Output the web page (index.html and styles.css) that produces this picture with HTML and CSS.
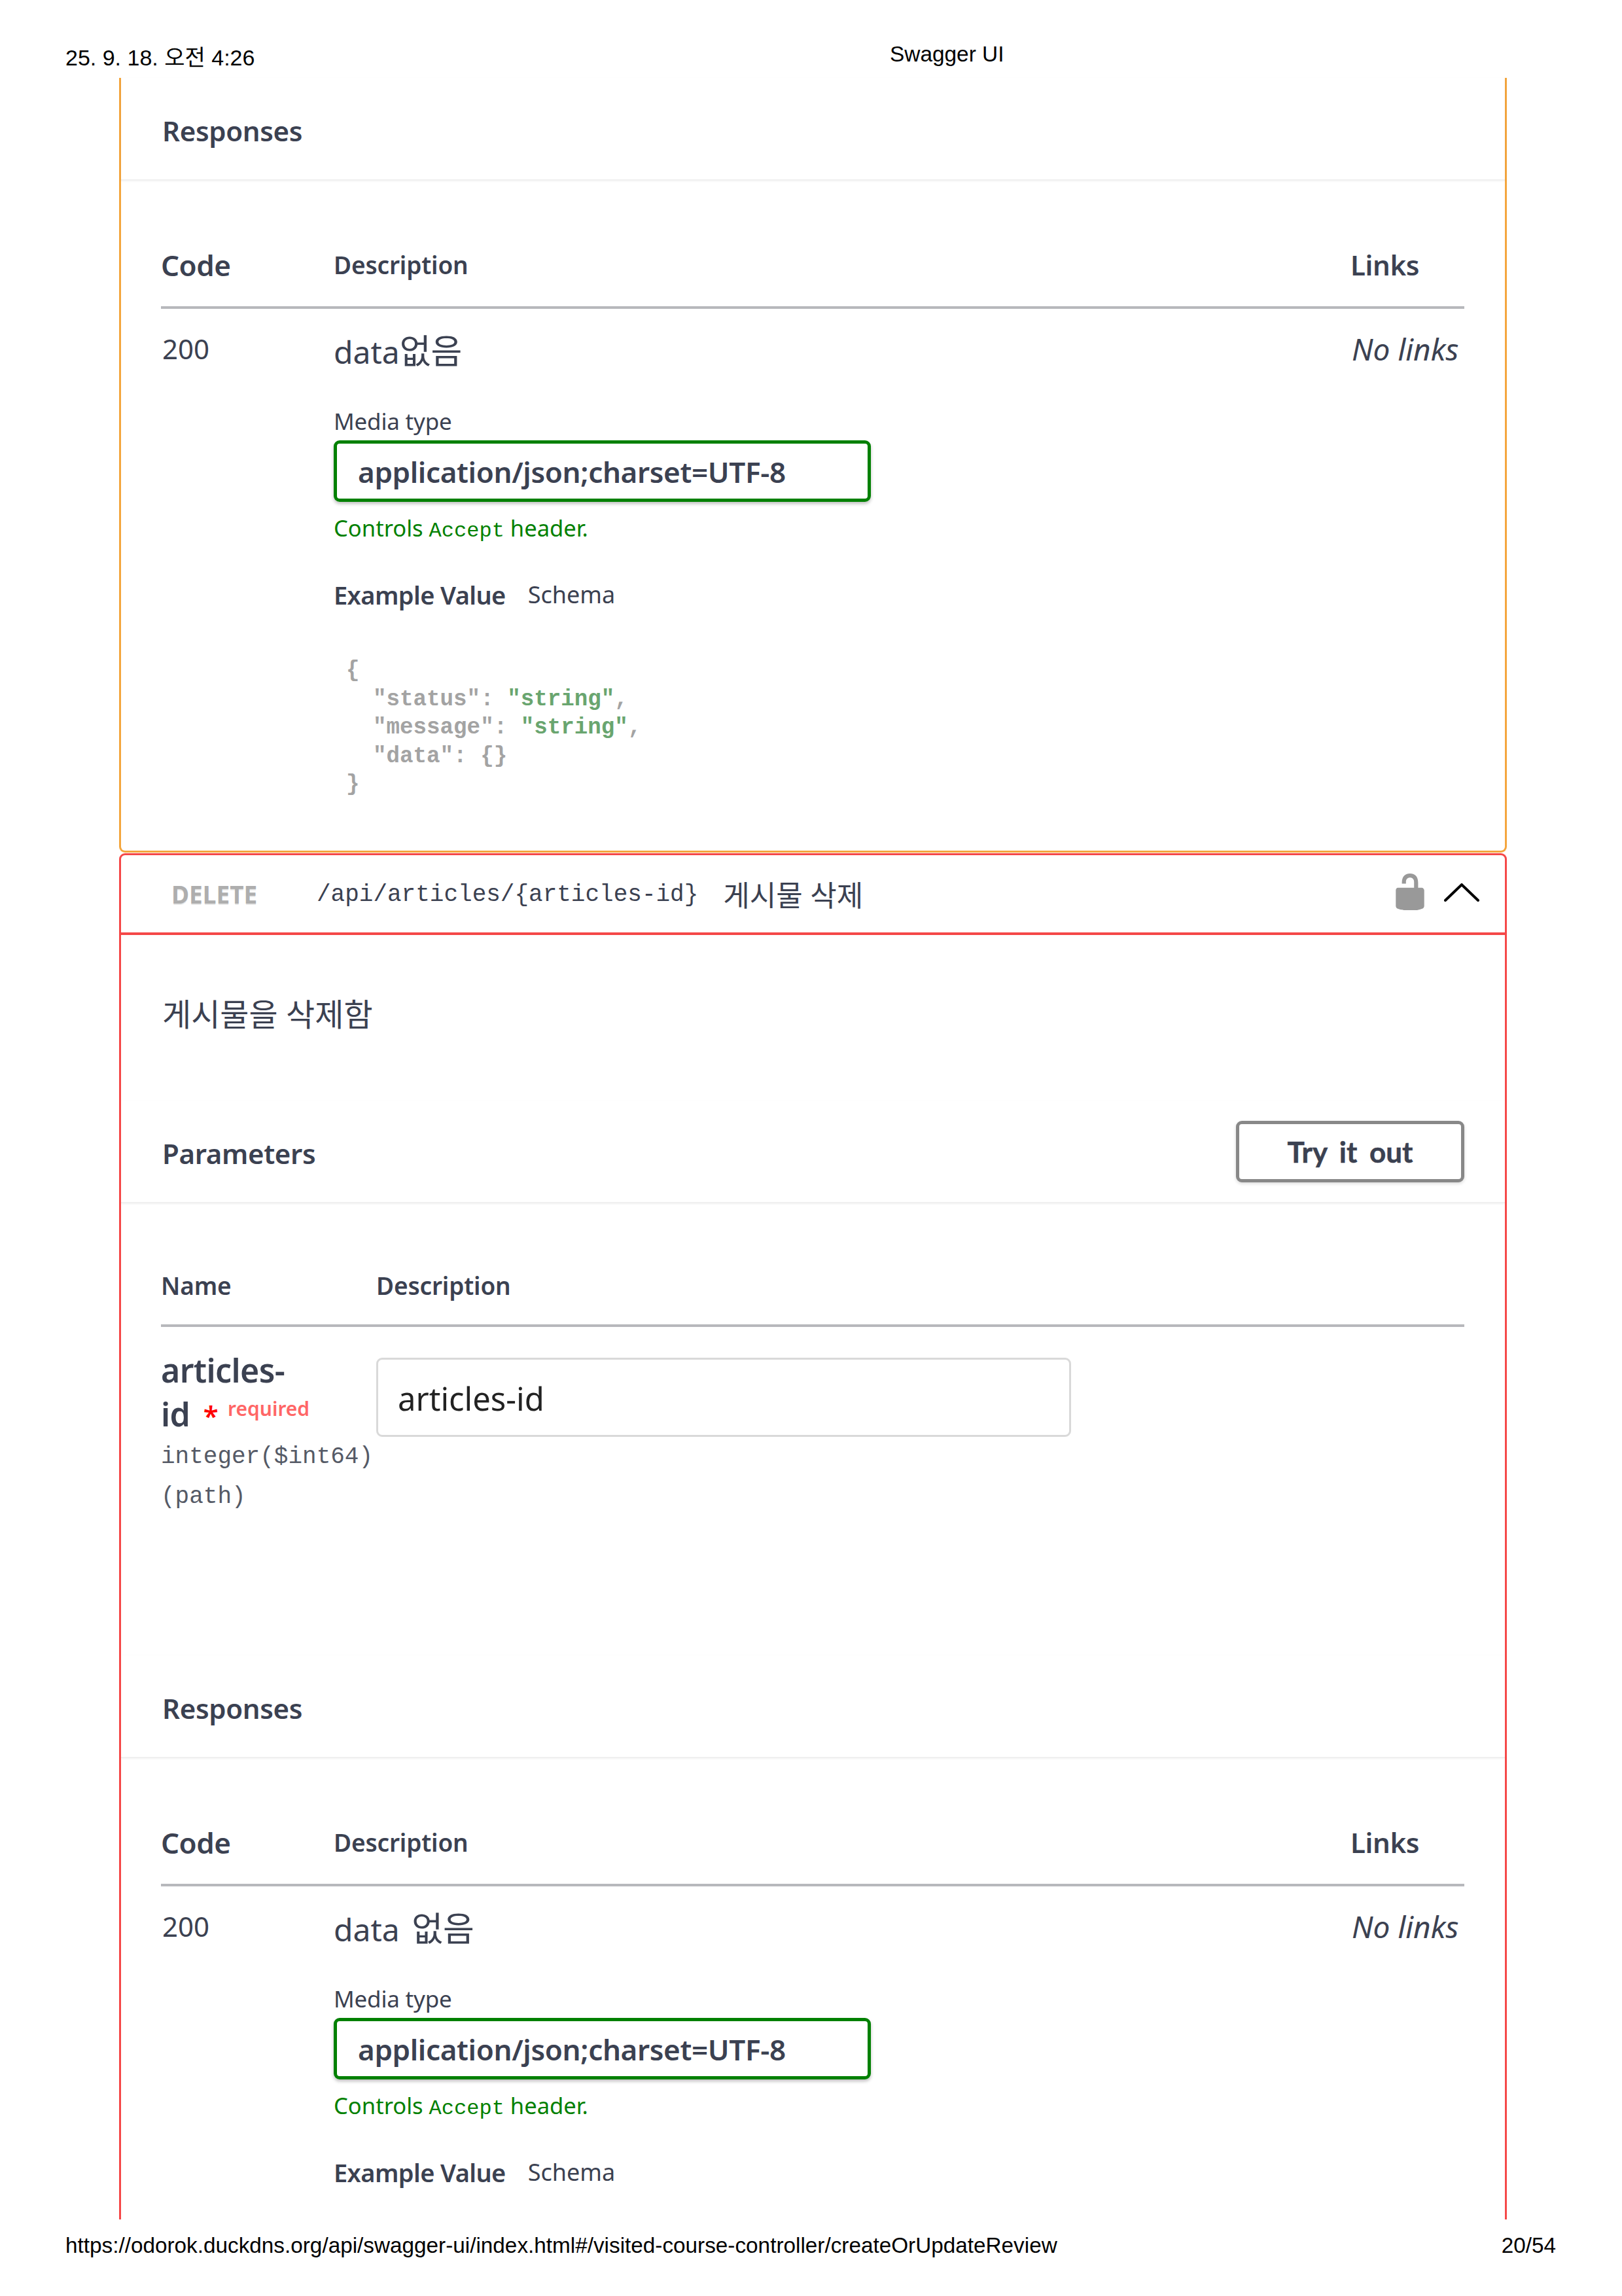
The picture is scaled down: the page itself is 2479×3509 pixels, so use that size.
FILE: index.html
```html
<!DOCTYPE html>
<html lang="ko">
<head>
<meta charset="utf-8">
<title>Swagger UI</title>
<link rel="stylesheet" href="styles.css">
</head>
<body>
<header class="print-head">
  <span class="print-date">25. 9. 18. 오전 4:26</span>
  <span class="print-title">Swagger UI</span>
</header>
<main class="cards">
  <section class="opblock put">
    <div class="section-head"><h4>Responses</h4></div>
    <div class="resp-table">
      <div class="resp-head">
        <span class="col-code">Code</span>
        <span class="col-desc">Description</span>
        <span class="col-links">Links</span>
      </div>
      <div class="resp-row">
        <div class="cell-code">200</div>
        <div class="cell-desc">
          <p class="resp-md">data<span class="ko">없음</span></p>
          <div class="media-label">Media type</div>
          <div class="media-select">application/json;charset=UTF-8</div>
          <div class="media-note">Controls <code>Accept</code> header.</div>
          <div class="tabs"><span class="tab-on">Example Value</span><span class="tab-off">Schema</span></div>
          <div class="example">
            <div class="ex-line">{</div>
            <div class="ex-line ex-in">"status": <span class="ex-str">"string"</span>,</div>
            <div class="ex-line ex-in">"message": <span class="ex-str">"string"</span>,</div>
            <div class="ex-line ex-in">"data": {}</div>
            <div class="ex-line">}</div>
          </div>
        </div>
        <div class="cell-links">No links</div>
      </div>
    </div>
  </section>

  <section class="opblock del">
    <div class="summary">
      <span class="method">DELETE</span>
      <span class="path">/api/articles/{articles-id}</span>
      <span class="summary-desc">게시물 삭제</span>
      <span class="summary-icons">
        <svg class="lock" viewBox="0 0 20 20"><path d="M15.8 8H14V5.6C14 2.703 12.665 1 10 1 7.334 1 6 2.703 6 5.6V6h2v-.801C8 3.754 8.797 3 10 3c1.203 0 2 .754 2 2.199V8H4c-.553 0-1 .646-1 1.199V17c0 .549.428 1.139.951 1.307l1.197.387C5.672 18.861 6.55 19 7.1 19h5.8c.549 0 1.428-.139 1.951-.307l1.196-.387c.524-.167.953-.757.953-1.306V9.199C17 8.646 16.352 8 15.8 8z"/></svg>
        <svg class="chevron" viewBox="0 0 54 28"><polyline points="2,26 27,2 52,26"/></svg>
      </span>
    </div>
    <p class="op-desc">게시물을 삭제함</p>
    <div class="section-head">
      <h4>Parameters</h4>
      <button class="try-btn">Try it out</button>
    </div>
    <div class="param-table">
      <div class="param-head"><span class="col-name">Name</span><span>Description</span></div>
      <div class="param-row">
        <div class="param-info">
          <div class="param-name">articles-<br>id <span class="star">*</span><span class="req">required</span></div>
          <div class="param-type">integer($int64)</div>
          <div class="param-type">(path)</div>
        </div>
        <div class="param-input">articles-id</div>
      </div>
    </div>
    <div class="section-head"><h4>Responses</h4></div>
    <div class="resp-table">
      <div class="resp-head">
        <span class="col-code">Code</span>
        <span class="col-desc">Description</span>
        <span class="col-links">Links</span>
      </div>
      <div class="resp-row">
        <div class="cell-code">200</div>
        <div class="cell-desc">
          <p class="resp-md resp-md-gap">data <span class="ko">없음</span></p>
          <div class="media-label">Media type</div>
          <div class="media-select">application/json;charset=UTF-8</div>
          <div class="media-note">Controls <code>Accept</code> header.</div>
          <div class="tabs"><span class="tab-on">Example Value</span><span class="tab-off">Schema</span></div>
        </div>
        <div class="cell-links">No links</div>
      </div>
    </div>
  </section>
</main>
<footer class="print-foot">
  <span>https://odorok.duckdns.org/api/swagger-ui/index.html#/visited-course-controller/createOrUpdateReview</span>
  <span>20/54</span>
</footer>
</body>
</html>
```
FILE: styles.css
```css
* { box-sizing: border-box; }
html, body { margin: 0; padding: 0; background: #fff; }
body {
  width: 2479px;
  height: 3509px;
  overflow: hidden;
  color: #3b4151;
  font-family: "Noto Sans", "Noto Sans CJK KR", sans-serif;
}
p, h4 { margin: 0; }

.print-head {
  height: 119px;
  display: flex;
  align-items: flex-start;
  padding-left: 100px;
  color: #000;
  font: 33.4px/40px "Liberation Sans", "Noto Sans CJK KR", sans-serif;
}
.print-date { width: 1260px; padding-top: 68px; font-size: 34px; }
.print-title { padding-top: 63px; }

.cards { margin-left: 182px; width: 2121px; }
.opblock { background: #fff; }
.put {
  height: 1184px;
  margin-bottom: 1px;
  border: 3px solid #f4a63e;
  border-top: 0;
  border-radius: 0 0 9px 9px;
}
.del {
  height: 2088px;
  overflow: hidden;
  border: 3px solid #f54848;
  border-bottom: 0;
  border-radius: 9px 9px 0 0;
}

.section-head {
  height: 157px;
  padding: 8px 62px 0 63px;
  display: flex;
  align-items: center;
  justify-content: space-between;
  border-bottom: 2px solid #f0f0f0;
  box-shadow: 0 1px 3px rgba(0,0,0,.06);
}
.section-head h4 { font-size: 42px; line-height: 60px; font-weight: 600; letter-spacing: -.35px; transform: translateY(-1px); }

.resp-table, .param-table { padding: 0 62px 0 61px; }
.resp-head {
  height: 196px;
  padding-bottom: 33px;
  display: flex;
  align-items: flex-end;
  border-bottom: 4px solid #b7b8bc;
  font-weight: 600;
  line-height: 60px;
}
.col-code { width: 264px; font-size: 44px; letter-spacing: -.5px; }
.col-desc { flex: 1; font-size: 37px; letter-spacing: -.15px; }
.col-links { width: 174px; font-size: 42px; letter-spacing: -.4px; }

.resp-row { display: flex; }
.cell-code { width: 264px; padding: 31px 0 0 2px; font-size: 42px; line-height: 60px; }
.cell-desc { flex: 1; }
.cell-links { width: 174px; padding: 31px 0 0 2px; font-size: 46px; line-height: 60px; font-style: italic; }
.resp-md { margin-top: 34px; font-size: 48px; line-height: 60px; }
.resp-md-gap { word-spacing: 6px; }
.ko { font-size: 52px; }
.media-label { margin-top: 51px; font-size: 35px; line-height: 50px; letter-spacing: -.2px; }
.media-select {
  width: 821px;
  height: 94px;
  margin-top: 4px;
  padding-left: 32px;
  border: 5px solid #008000;
  border-radius: 9px;
  box-shadow: 0 3px 5px rgba(0,0,0,.25);
  font-size: 44px;
  font-weight: 600;
  line-height: 86px;
  letter-spacing: -.36px;
}
.media-note { margin-top: 15px; color: #008000; font-size: 34.6px; line-height: 50px; }
.media-note code { font-family: "Liberation Mono", monospace; font-size: 32px; }
.tabs { margin-top: 47px; display: flex; gap: 34px; font-size: 38px; line-height: 50px; }
.tab-on { font-weight: 600; letter-spacing: -.6px; }
.tab-off { font-size: 36px; }
.example {
  margin: 70px 0 0 19px;
  color: #a3a3a3;
  font: bold 34.2px/43.6px "Liberation Mono", monospace;
}
.ex-line { white-space: pre; }
.ex-in { padding-left: 41px; }
.ex-str { color: #69a56f; }

.summary { height: 122px; padding: 0 39px 0 77px; display: flex; align-items: center; border-bottom: 4px solid #f54848; }
.method { width: 222px; color: #aeaeae; font-size: 37px; font-weight: 700; text-shadow: 0 2px 0 rgba(0,0,0,.1); }
.path { padding-top: 4px; font: 36px/50px "Liberation Mono", monospace; }
.summary-desc { margin-left: 38px; font-size: 44px; }
.summary-icons { margin-left: auto; display: flex; align-items: center; gap: 21px; }
.lock { width: 62px; height: 62px; margin-top: -6px; fill: #999; }
.chevron { width: 54px; height: 28px; margin-top: -4px; fill: none; stroke: #000; stroke-width: 4; stroke-linecap: round; }

.op-desc { height: 253px; padding: 91px 63px 0; font-size: 48px; line-height: 60px; }
.try-btn {
  width: 349px;
  height: 94px;
  margin-top: -8px;
  padding: 0;
  background: #fff;
  border: 5px solid #888;
  border-radius: 9px;
  box-shadow: 0 2px 5px rgba(0,0,0,.15);
  color: #3b4151;
  font: 700 44px/1 Lato, sans-serif;
  word-spacing: 8px;
  -webkit-text-stroke: .5px #3b4151;
}
.param-head {
  height: 189px;
  padding-bottom: 29px;
  display: flex;
  align-items: flex-end;
  border-bottom: 4px solid #b7b8bc;
  font-size: 37px;
  font-weight: 600;
  line-height: 60px;
  letter-spacing: -.15px;
}
.col-name { width: 329px; }
.param-row { height: 502px; display: flex; }
.param-info { width: 329px; padding-top: 33px; }
.param-name { font-size: 50px; font-weight: 600; line-height: 67px; letter-spacing: -.6px; }
.star { margin-left: 8px; color: #f00; font-size: 42px; line-height: 1; }
.req { margin-left: 15px; color: #f66; font-size: 30px; font-weight: 600; line-height: 1; vertical-align: 16px; letter-spacing: 0; }
.param-type { margin-top: 1px; padding-top: 2px; color: #555a66; font: 36px/58px "Liberation Mono", monospace; white-space: nowrap; }
.param-type:first-of-type { margin-top: 3px; }
.param-input {
  width: 1062px;
  height: 121px;
  margin-top: 47px;
  padding: 0 30px;
  border: 3px solid #d9d9d9;
  border-radius: 9px;
  color: #222;
  font-size: 49px;
  line-height: 119px;
}

.print-foot {
  padding: 20px 101px 0 100px;
  display: flex;
  justify-content: space-between;
  color: #000;
  font: 33.3px/40px "Liberation Sans", sans-serif;
}
```
